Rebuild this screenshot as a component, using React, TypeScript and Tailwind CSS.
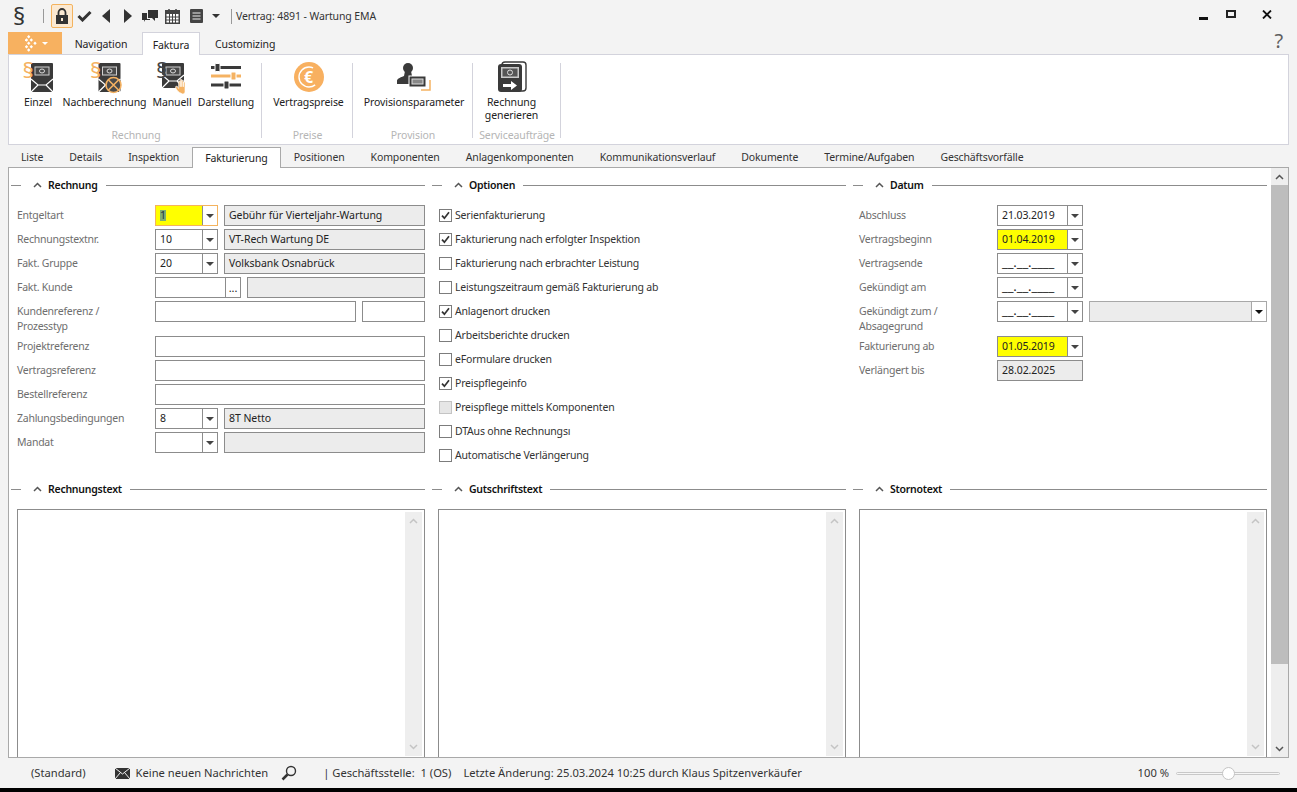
import clsx from 'clsx'
import type { ReactNode } from 'react'

const FONT = 'font-["Noto_Sans",sans-serif]'

function Caret({ className = 'fill-[#444]' }: { className?: string }) {
  return (
    <svg width="8" height="4" viewBox="0 0 8 4" className={className}>
      <path d="M0 0h8L4 4z" />
    </svg>
  )
}

function Chevron({ up = true, className }: { up?: boolean; className?: string }) {
  return (
    <svg width="9" height="6" viewBox="0 0 9 6" fill="none" strokeWidth="1.5" className={clsx('stroke-current', className)}>
      <path d={up ? 'M1 5l3.5-3.5L8 5' : 'M1 1l3.5 3.5L8 1'} />
    </svg>
  )
}

function Box({ className, children }: { className?: string; children?: ReactNode }) {
  return (
    <div className={clsx('h-[21px] flex items-center border border-[#8c8c8c] text-[10.5px] text-[#222] leading-none whitespace-nowrap', className)}>
      {children}
    </div>
  )
}

function SelectBox({ value, yellow, focus, w = 'w-[63px]' }: { value?: ReactNode; yellow?: boolean; focus?: boolean; w?: string }) {
  return (
    <Box className={clsx(w, 'shrink-0 items-stretch bg-white', focus && 'border-[#f4b35e]')}>
      <div className={clsx('flex-1 flex items-center pl-[4px]', yellow && 'bg-[#ffff00]')}>{value}</div>
      <div className="w-[15px] flex items-center justify-center border-l border-[#8c8c8c]">
        <Caret />
      </div>
    </Box>
  )
}

function ReadOnly({ value, className }: { value?: string; className?: string }) {
  return <Box className={clsx('bg-[#ececec] pl-[4px] tracking-[-0.05px]', className)}>{value}</Box>
}

function TextInput({ className }: { className?: string }) {
  return <Box className={clsx('bg-white', className)} />
}

function SectionHead({ title }: { title: string }) {
  return (
    <div className="h-5 flex items-center text-[10.5px]">
      <div className="ml-px w-[10px] h-px bg-[#8c8c8c]" />
      <Chevron className="ml-[12px] text-[#555]" />
      <span className="ml-[6px] pt-px font-semibold tracking-[-0.25px] text-[#111] whitespace-nowrap">{title}</span>
      <div className="ml-[8px] flex-1 h-px bg-[#8c8c8c]" />
    </div>
  )
}

function Row({ label, children, tall }: { label: ReactNode; children: ReactNode; tall?: boolean }) {
  return (
    <div className={clsx('flex', tall ? 'h-[32px]' : 'h-[21px]')}>
      <div className="w-[138px] shrink-0 pt-[3px] leading-[15px] text-[10.5px] tracking-[-0.25px] text-[#6e6e6e]">{label}</div>
      <div className="flex-1 flex gap-[6px]">{children}</div>
    </div>
  )
}

function Check({ label, checked, disabled }: { label: string; checked?: boolean; disabled?: boolean }) {
  return (
    <div className="h-[21px] flex items-center text-[10.5px] tracking-[-0.18px] text-[#333] whitespace-nowrap">
      <div className={clsx('w-[13px] h-[13px] border flex items-center justify-center', disabled ? 'bg-[#e6e6e6] border-[#c4c4c4]' : 'bg-white border-[#7c7c7c]')}>
        {checked && (
          <svg width="11" height="11" viewBox="0 0 11 11" fill="none" stroke="#333" strokeWidth="1.7">
            <path d="M2 5.6l2.4 2.6L9 2.2" />
          </svg>
        )}
      </div>
      <span className="ml-[3px]">{label}</span>
    </div>
  )
}

function TextPane() {
  return (
    <div className="ml-[7px] mt-[10px] h-[270px] border border-[#8c8c8c] bg-white flex justify-end">
      <div className="w-[17px] bg-[#eeeeee] mr-[2px] mt-[2px] flex flex-col items-center justify-between py-[6px] h-[244px]">
        <Chevron className="text-[#c4c4c4]" />
        <Chevron up={false} className="text-[#c4c4c4]" />
      </div>
    </div>
  )
}

function EnvelopeBody({ x = 11, h = 29 }: { x?: number; h?: number }) {
  return (
    <g transform={`translate(${x} 4)`}>
      <rect width="22" height={h} fill="#3a3a3a" rx="1" />
      <rect x="4" y="4" width="14" height="8" fill="#4a4a4a" stroke="#d0d0d0" />
      <ellipse cx="11" cy="8" rx="2.500" ry="2" fill="none" stroke="#ddd" />
      <path d={`M0 ${h - 13}l7 6h8l7-6M7 ${h - 7}l-7 7M15 ${h - 7}l7 7`} fill="none" stroke="#fff" strokeWidth="1.200" />
    </g>
  )
}

function Para({ x, y, color, size = 22 }: { x: number; y: number; color: string; size?: number }) {
  return (
    <text x={x} y={y} fontSize={size} fill={color} fontFamily="Noto Sans, sans-serif">§</text>
  )
}

function IconEinzel() {
  return (
    <svg width="36" height="36" viewBox="0 0 36 36" className="overflow-visible">
      <EnvelopeBody />
      <Para x={2.500} y={18.500} color="#f5b262" />
    </svg>
  )
}

function IconNach() {
  return (
    <svg width="36" height="36" viewBox="0 0 36 36" className="overflow-visible">
      <EnvelopeBody x={11.500} />
      <Para x={3} y={18.500} color="#f5b262" />
      <circle cx="26.500" cy="26" r="7.500" fill="#4a4a4a" stroke="#f5b262" strokeWidth="1.600" />
      <path d="M21.500 21l10 10M31.500 21l-10 10" stroke="#f5b262" strokeWidth="1.600" />
    </svg>
  )
}

function IconManuell() {
  return (
    <svg width="36" height="36" viewBox="0 0 36 36" className="overflow-visible">
      <EnvelopeBody x={8} h={25} />
      <Para x={2} y={18.500} color="#444" />
      <path transform="translate(7 7) scale(.8)" d="M23 33c-3-2-4-4-5-7l2-1 2 3v-9h2v7-9h2v9-8h2v8-6h2v12c0 2-1 3-3 3z" fill="#f5b262" stroke="#fff" strokeWidth=".8" />
    </svg>
  )
}

function IconSliders() {
  return (
    <svg width="32" height="30" viewBox="0 0 32 30">
      <path d="M1 5.500h30" stroke="#3a3a3a" strokeWidth="3" />
      <path d="M1 14h30" stroke="#f5b262" strokeWidth="3" />
      <path d="M1 23h30" stroke="#3a3a3a" strokeWidth="3" />
      <rect x="5" y="1.500" width="5" height="8" rx="1" fill="#3a3a3a" stroke="#fff" />
      <rect x="21" y="10" width="5" height="8" rx="1" fill="#f5b262" stroke="#fff" />
      <rect x="14" y="19" width="5" height="8" rx="1" fill="#3a3a3a" stroke="#fff" />
    </svg>
  )
}

function IconEuro() {
  return (
    <svg width="32" height="32" viewBox="0 0 32 32">
      <circle cx="16" cy="16" r="15" fill="#f8b060" />
      <circle cx="16" cy="16" r="10" fill="none" stroke="#fff" strokeWidth="1.400" strokeDasharray="42 20" strokeDashoffset="-9" />
      <text x="15.500" y="21.500" fontSize="16" fontWeight="700" textAnchor="middle" fill="#fff" fontFamily="Noto Sans, sans-serif">€</text>
    </svg>
  )
}

function IconProvision() {
  return (
    <svg width="36" height="32" viewBox="0 0 36 32">
      <circle cx="12" cy="7" r="5" fill="#3a3a3a" />
      <path d="M9 10h6l1 5 7 2v6H1v-3c0-2 2-3 7-5z" fill="#3a3a3a" />
      <rect x="13" y="15" width="17" height="11" fill="#3a3a3a" stroke="#fff" />
      <rect x="16" y="18" width="11" height="5" fill="#888" stroke="#ddd" />
      <path d="M34 19v10h-9" fill="none" stroke="#f5b262" strokeWidth="1.500" />
    </svg>
  )
}

function IconGenerate() {
  return (
    <svg width="30" height="32" viewBox="0 0 30 32">
      <rect x="5" y="1" width="24" height="29" rx="3" fill="none" stroke="#3a3a3a" strokeWidth="1.400" />
      <rect x="1" y="3" width="24" height="28" rx="3" fill="#3a3a3a" />
      <rect x="4" y="6" width="18" height="11" fill="#c9c9c9" />
      <rect x="5.500" y="7.500" width="15" height="8" fill="#555" />
      <circle cx="13" cy="11.500" r="2.500" fill="none" stroke="#ddd" />
      <path d="M6 23h8v-3l6 4.500-6 4.500v-3H6z" fill="#fff" />
    </svg>
  )
}

function RibbonButton({ icon, label, w, label2 }: { icon: ReactNode; label: string; w: string; label2?: string }) {
  return (
    <div className={clsx(w, 'shrink-0 flex flex-col items-center')}>
      <div className="h-[38px] flex items-center justify-center">{icon}</div>
      <div className="text-[10.5px] leading-[13px] text-[#222] text-center whitespace-nowrap">
        {label}
        {label2 && <div>{label2}</div>}
      </div>
    </div>
  )
}

function RibbonGroup({ title, w, className, children }: { title: string; w: string; className?: string; children: ReactNode }) {
  return (
    <div className={clsx(w, 'shrink-0 h-[89px] pt-[3px] relative flex', className)}>
      {children}
      <div className="absolute top-[8px] right-0 w-px h-[75px] bg-[#d3d3dc]" />
      <div className="absolute bottom-[2px] left-0 right-0 text-center text-[10.5px] leading-[13px] text-[#b5b5b5] whitespace-nowrap">{title}</div>
    </div>
  )
}

function ToolbarIcon({ children, w = 'w-[22px]' }: { children: ReactNode; w?: string }) {
  return <div className={clsx(w, 'h-6 flex items-center justify-center shrink-0')}>{children}</div>
}

const PAGE_TABS = ['Liste', 'Details', 'Inspektion', 'Fakturierung', 'Positionen', 'Komponenten', 'Anlagenkomponenten', 'Kommunikationsverlauf', 'Dokumente', 'Termine/Aufgaben', 'Geschäftsvorfälle']

// centres of the small diamonds in the orange app button
const APP_DOTS: [number, number][] = [[3.7, 1.7], [1.5, 5], [6.3, 5], [3.7, 8.3], [10, 8.3], [1.5, 11.7], [6.3, 11.7], [3.7, 15]]

function Toolbar() {
  return (
    <div className="h-8 flex items-center relative">
      <div className="w-[38px] text-center text-[24px] leading-none text-[#333]">§</div>
      <div className="w-px h-[14px] bg-[#999] ml-[5px]" />
      <div className="ml-[7px] w-[22px] h-6 border border-[#f4b35e] bg-[#fbe9d2] rounded-[2px] flex items-center justify-center">
        <svg width="14" height="16" viewBox="0 0 14 16">
          <path d="M3.500 7V4.500a3.500 3.500 0 017 0V7" fill="none" stroke="#333" strokeWidth="1.800" />
          <rect x="1" y="7" width="12" height="9" fill="#333" />
          <rect x="6" y="10" width="2" height="3" fill="#fbe9d2" />
        </svg>
      </div>
      <ToolbarIcon w="w-[22px]">
        <svg width="15" height="12" viewBox="0 0 15 12" fill="none" stroke="#333" strokeWidth="3"><path d="M1.500 6l4 4 8-8" /></svg>
      </ToolbarIcon>
      <ToolbarIcon>
        <svg width="8" height="14" viewBox="0 0 8 14" fill="#333"><path d="M8 0v14L0 7z" /></svg>
      </ToolbarIcon>
      <ToolbarIcon>
        <svg width="8" height="14" viewBox="0 0 8 14" fill="#333"><path d="M0 0v14l8-7z" /></svg>
      </ToolbarIcon>
      <ToolbarIcon>
        <svg width="16" height="13" viewBox="0 0 16 13" fill="#333"><path d="M6 0h10v8h-3v3l-3-3H6zM0 3h5v6h3v1H3l-1 2v-2H0z" /></svg>
      </ToolbarIcon>
      <ToolbarIcon>
        <svg width="15" height="15" viewBox="0 0 15 15">
          <rect x="0" y="1" width="15" height="14" fill="#444" />
          <rect x="1.500" y="5" width="12" height="8.500" fill="#fff" />
          <path d="M4.500 5v9M7.500 5v9M10.500 5v9M1 8h13M1 11h13" stroke="#444" />
          <path d="M4 0v3M11 0v3" stroke="#444" strokeWidth="1.500" />
        </svg>
      </ToolbarIcon>
      <ToolbarIcon w="w-[26px]">
        <svg width="13" height="14" viewBox="0 0 13 14">
          <rect width="13" height="14" rx="1" fill="#444" />
          <path d="M2.500 4h8M2.500 7h8M2.500 10h8" stroke="#eee" strokeWidth="1.200" />
        </svg>
      </ToolbarIcon>
      <ToolbarIcon w="w-[14px]">
        <Caret className="fill-[#333]" />
      </ToolbarIcon>
      <div className="w-px h-[15px] bg-[#999] ml-[8px]" />
      <div className="ml-[4px] pt-px text-[10.5px] text-[#333] whitespace-nowrap">Vertrag: 4891 - Wartung EMA</div>
      <div className="ml-auto flex items-center relative h-full">
        <div className="w-[9px] h-[3px] bg-[#111] mt-[4px]" />
        <div className="ml-[18px] w-[10px] h-[8px] border-2 border-[#222] mb-[4px]" />
        <svg className="ml-[26px] mr-[25px] mb-[4px]" width="10" height="9" viewBox="0 0 10 9" fill="none" stroke="#111" strokeWidth="1.800"><path d="M1 .5l8 8M9 .5l-8 8" /></svg>
      </div>
    </div>
  )
}

function RibbonTabs() {
  return (
    <div className="h-[22px] flex items-stretch text-[10.5px] text-[#222] relative">
      <div className="ml-2 w-[54px] bg-[#f7b160] flex items-center pl-[17px] gap-[5px]">
        <svg width="12" height="17" viewBox="0 0 12 17" fill="#fff">
          {APP_DOTS.map(([x, y]) => (
            <path key={`${x}-${y}`} d={`M${x} ${y - 1.7}l1.700 1.700-1.700 1.700-1.700-1.700z`} />
          ))}
        </svg>
        <svg width="6" height="3" viewBox="0 0 6 3" fill="#fff"><path d="M0 0h6L3 3z" /></svg>
      </div>
      <div className="ml-[13px] w-[52px] flex items-center justify-center pt-[3px] whitespace-nowrap">Navigation</div>
      <div className="ml-[15px] w-[58px] h-[23px] z-10 bg-white border border-b-0 border-[#d3d3dc] flex items-center justify-center pt-[3px]">Faktura</div>
      <div className="ml-[15px] flex items-center pt-[3px]">Customizing</div>
      <div className="ml-auto mr-[14px] text-[20px] leading-[20px] text-[#5f5f5f] mt-[-1px]">?</div>
    </div>
  )
}

function Ribbon() {
  return (
    <div className="mx-2 h-[91px] bg-white border border-[#d3d3dc] flex pl-px">
      <RibbonGroup title="Rechnung" w="w-[252px]" className="pl-[3px]">
        <RibbonButton w="w-[50px]" label="Einzel" icon={<IconEinzel />} />
        <RibbonButton w="w-[83px]" label="Nachberechnung" icon={<IconNach />} />
        <RibbonButton w="w-[52px]" label="Manuell" icon={<IconManuell />} />
        <RibbonButton w="w-[56px]" label="Darstellung" icon={<IconSliders />} />
      </RibbonGroup>
      <RibbonGroup title="Preise" w="w-[91px]">
        <RibbonButton w="w-[93px]" label="Vertragspreise" icon={<IconEuro />} />
      </RibbonGroup>
      <RibbonGroup title="Provision" w="w-[120px]">
        <RibbonButton w="w-[122px]" label="Provisionsparameter" icon={<IconProvision />} />
      </RibbonGroup>
      <RibbonGroup title="Serviceaufträge" w="w-[88px]">
        <RibbonButton w="w-[77px]" label="Rechnung" label2="generieren" icon={<IconGenerate />} />
      </RibbonGroup>
    </div>
  )
}

function PageTabs() {
  return (
    <div className="mt-[2px] h-[20px] mx-2 flex items-stretch text-[10.5px] tracking-[-0.13px] text-[#333] relative z-10">
      {PAGE_TABS.map((t) =>
        t === 'Fakturierung' ? (
          <div key={t} className="h-[21px] px-[12px] pt-px bg-white border border-b-0 border-[#a9a9a9] flex items-center text-[#222] whitespace-nowrap">
            {t}
          </div>
        ) : (
          <div key={t} className="px-[13px] pt-px flex items-center whitespace-nowrap">{t}</div>
        ),
      )}
    </div>
  )
}

function Rechnung() {
  return (
    <div>
      <SectionHead title="Rechnung" />
      <div className="mt-[10px] pl-[7px] flex flex-col gap-[3px]">
        <Row label="Entgeltart">
          <SelectBox yellow focus value={<span className="bg-[#7fae72] text-[#234]">1</span>} />
          <ReadOnly className="flex-1" value="Gebühr für Vierteljahr-Wartung" />
        </Row>
        <Row label="Rechnungstextnr.">
          <SelectBox value="10" />
          <ReadOnly className="flex-1" value="VT-Rech Wartung DE" />
        </Row>
        <Row label="Fakt. Gruppe">
          <SelectBox value="20" />
          <ReadOnly className="flex-1" value="Volksbank Osnabrück" />
        </Row>
        <Row label="Fakt. Kunde">
          <Box className="w-[86px] shrink-0 bg-white items-stretch">
            <div className="flex-1" />
            <div className="w-[15px] border-l border-[#8c8c8c] flex items-end justify-center pb-[6px] text-[11px] leading-[6px]">...</div>
          </Box>
          <ReadOnly className="flex-1" />
        </Row>
        <Row tall label={<>Kundenreferenz /<br />Prozesstyp</>}>
          <TextInput className="flex-1" />
          <TextInput className="w-[63px]" />
        </Row>
        <Row label="Projektreferenz"><TextInput className="flex-1" /></Row>
        <Row label="Vertragsreferenz"><TextInput className="flex-1" /></Row>
        <Row label="Bestellreferenz"><TextInput className="flex-1" /></Row>
        <Row label="Zahlungsbedingungen">
          <SelectBox value="8" />
          <ReadOnly className="flex-1" value="8T Netto" />
        </Row>
        <Row label="Mandat">
          <SelectBox />
          <ReadOnly className="flex-1" />
        </Row>
      </div>
    </div>
  )
}

function Optionen() {
  return (
    <div>
      <SectionHead title="Optionen" />
      <div className="mt-[10px] pl-[8px] flex flex-col gap-[3px]">
        <Check checked label="Serienfakturierung" />
        <Check checked label="Fakturierung nach erfolgter Inspektion" />
        <Check label="Fakturierung nach erbrachter Leistung" />
        <Check label="Leistungszeitraum gemäß Fakturierung ab" />
        <Check checked label="Anlagenort drucken" />
        <Check label="Arbeitsberichte drucken" />
        <Check label="eFormulare drucken" />
        <Check checked label="Preispflegeinfo" />
        <Check disabled label="Preispflege mittels Komponenten" />
        <Check label="DTAus ohne Rechnungsı" />
        <Check label="Automatische Verlängerung" />
      </div>
    </div>
  )
}

const EMPTY_DATE = <span className="text-[13px] leading-none mt-[-3px]">__.__.____</span>

function Datum() {
  return (
    <div>
      <SectionHead title="Datum" />
      <div className="mt-[10px] pl-[7px] flex flex-col gap-[3px]">
        <Row label="Abschluss"><SelectBox w="w-[86px]" value="21.03.2019" /></Row>
        <Row label="Vertragsbeginn"><SelectBox w="w-[86px]" yellow value="01.04.2019" /></Row>
        <Row label="Vertragsende"><SelectBox w="w-[86px]" value={EMPTY_DATE} /></Row>
        <Row label="Gekündigt am"><SelectBox w="w-[86px]" value={EMPTY_DATE} /></Row>
        <Row tall label={<>Gekündigt zum /<br />Absagegrund</>}>
          <SelectBox w="w-[86px]" value={EMPTY_DATE} />
          <Box className="flex-1 bg-[#ececec] border-[#a8a8a8] items-stretch">
            <div className="flex-1" />
            <div className="w-[15px] bg-white border-l border-[#a8a8a8] flex items-center justify-center">
              <Caret className="fill-[#111]" />
            </div>
          </Box>
        </Row>
        <Row label="Fakturierung ab"><SelectBox w="w-[86px]" yellow value="01.05.2019" /></Row>
        <Row label="Verlängert bis"><ReadOnly className="w-[86px]" value="28.02.2025" /></Row>
      </div>
    </div>
  )
}

function MainScrollbar() {
  return (
    <div className="w-[17px] shrink-0 flex flex-col bg-[#eeeeee]">
      <div className="h-[17px] flex items-center justify-center text-[#555]"><Chevron /></div>
      <div className="h-[479px] bg-[#bdbdbd]" />
      <div className="flex-1" />
      <div className="h-[17px] flex items-center justify-center text-[#555]"><Chevron up={false} /></div>
    </div>
  )
}

function Panel() {
  return (
    <div className="mx-2 h-[591px] bg-white border border-[#a9a9a9] flex overflow-hidden">
      <div className="flex-1 min-w-0 pl-px pt-[7px] grid grid-cols-[415px_415px_415px] grid-rows-[304px_1fr] gap-x-[6px]">
        <Rechnung />
        <Optionen />
        <Datum />
        {['Rechnungstext', 'Gutschriftstext', 'Stornotext'].map((t) => (
          <div key={t} className="min-h-0">
            <SectionHead title={t} />
            <TextPane />
          </div>
        ))}
      </div>
      <div className="w-[4px] shrink-0" />
      <MainScrollbar />
    </div>
  )
}

function StatusBar() {
  return (
    <div className="flex-1 flex items-center text-[11.2px] tracking-normal text-[#333] whitespace-nowrap relative">
      <span className="ml-[31px]">(Standard)</span>
      <svg className="ml-[29px]" width="15" height="11" viewBox="0 0 15 11">
        <rect width="15" height="11" fill="#333" />
        <path d="M0 0l7.500 6L15 0M0 11l5.500-6.500M15 11L9.500 4.500" fill="none" stroke="#f3f3f3" />
      </svg>
      <span className="ml-[6px]">Keine neuen Nachrichten</span>
      <svg className="ml-[13px]" width="16" height="16" viewBox="0 0 16 16" fill="none" stroke="#333">
        <circle cx="10" cy="6" r="4.500" strokeWidth="1.400" />
        <path d="M6.500 9.500L1.500 14.500" strokeWidth="2.500" />
      </svg>
      <span className="ml-[26px]">| Geschäftsstelle:&nbsp; 1 (OS)</span>
      <span className="ml-[12px]">Letzte Änderung: 25.03.2024 10:25 durch Klaus Spitzenverkäufer</span>
      <span className="ml-auto">100 %</span>
      <div className="ml-[7px] mr-[17px] w-[104px] h-[3px] border border-[#c8c8c8] rounded-full bg-[#f6f6f6] relative">
        <div className="absolute left-[45px] -top-[6px] w-[13px] h-[13px] rounded-full bg-white border border-[#c4c4c4]" />
      </div>
    </div>
  )
}

export default function App() {
  return (
    <div className={clsx('w-[1297px] h-[792px] bg-black overflow-hidden tracking-[-0.1px]', FONT)}>
      <div className="h-[788px] bg-[#f3f3f3] flex flex-col">
        <Toolbar />
        <RibbonTabs />
        <Ribbon />
        <PageTabs />
        <Panel />
        <StatusBar />
      </div>
    </div>
  )
}
